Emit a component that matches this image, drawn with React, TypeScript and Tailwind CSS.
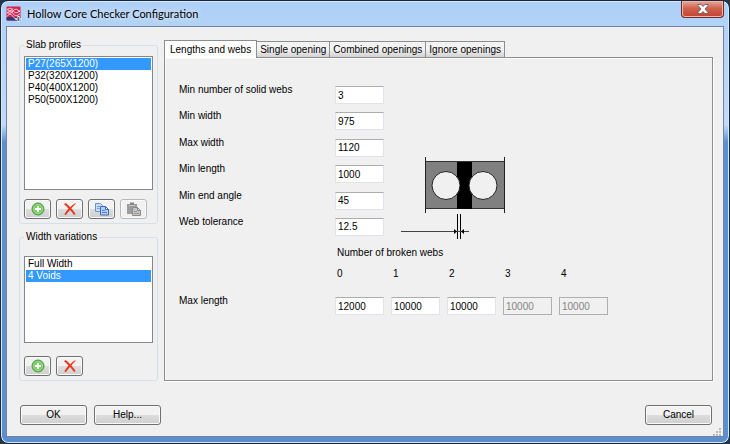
import React, { useState } from "react";

const profiles = ["P27(265X1200)", "P32(320X1200)", "P40(400X1200)", "P50(500X1200)"];
const variations = ["Full Width", "4 Voids"];
const tabs = ["Lengths and webs", "Single opening", "Combined openings", "Ignore openings"];

const fields = [
  { id: "solidWebs", label: "Min number of solid webs", value: "3" },
  { id: "minWidth", label: "Min width", value: "975" },
  { id: "maxWidth", label: "Max width", value: "1120" },
  { id: "minLength", label: "Min length", value: "1000" },
  { id: "minEndAngle", label: "Min end angle", value: "45" },
  { id: "webTolerance", label: "Web tolerance", value: "12.5" },
];

const maxLengths = [
  { webs: "0", value: "12000", disabled: false },
  { webs: "1", value: "10000", disabled: false },
  { webs: "2", value: "10000", disabled: false },
  { webs: "3", value: "10000", disabled: true },
  { webs: "4", value: "10000", disabled: true },
];

const AppIcon = () => (
  <svg width="16" height="16" viewBox="0 0 16 16">
    <rect x="0.5" y="0.5" width="14" height="14" rx="1" fill="#d4204c" />
    <path d="M0.5 11.500q5-1 14 0v2q0 1-1 1h-12q-1 0-1-1z" fill="#2a3a78" />
    <path
      d="M1 4.500c2-3 4-3 6 0s4 3 7 0M1 7.500c2-3 4-3 6 0s4 3 7 0M1 10.500c2-3 4-3 6 0s4 3 7 0M1 2.500c2 3 4 3 6 0M1 6q3 3 6-1t7 1"
      fill="none"
      stroke="#ffe4ea"
      strokeWidth="1"
    />
    <path d="M12.500 10v6M9.500 13h6" stroke="#f4f7fb" strokeWidth="2" />
    <path d="M12.500 11v4M10.500 13h4" stroke="#4a5a78" strokeWidth="0.9" />
  </svg>
);

const AddIcon = () => (
  <svg width="14" height="14" viewBox="0 0 14 14">
    <circle cx="7" cy="7" r="6" fill="#62b64f" stroke="#4a9d45" />
    <circle cx="7" cy="7" r="4.600" fill="#7cc965" stroke="#b6e3a5" strokeWidth="0.8" />
    <path d="M7 4v6M4 7h6" stroke="#fff" strokeWidth="1.800" />
  </svg>
);

const DeleteIcon = () => (
  <svg width="14" height="14" viewBox="0 0 14 14">
    <path
      d="M1 2.200 2.600 1q2.600 1.800 4.600 4.200Q9.400 2.600 12.200 1.200l.6.500Q10 4 8.400 6.600q2.600 3 4.200 5.400l-1.600.9Q9.200 10 7 7.900 4.600 10.400 3 13l-1.800-.6Q3 9.200 5.500 6.400 3.600 4.200 1 2.200z"
      fill="#e8361f"
    />
  </svg>
);

const CopyIcon = () => (
  <svg width="16" height="14" viewBox="0 0 16 14">
    <path d="M1.500 1.500h5l2 2v6h-7z" fill="#c9dcf7" stroke="#6b93d4" />
    <path d="M3 4.500h3M3 6.500h4" stroke="#7ba3e0" />
    <path d="M6.500 4.500h5l3 3v5.500h-8z" fill="#b4cdf3" stroke="#3c69bd" />
    <path d="M11.500 4.500v3h3z" fill="#eef5ff" stroke="#3c69bd" />
    <path d="M8 8.500h3M8 10.500h5" stroke="#5583d0" />
  </svg>
);

const PasteIcon = () => (
  <svg width="16" height="14" viewBox="0 0 16 14">
    <path d="M1 2h10v10H1z" fill="#9c9c9c" />
    <path d="M4 0.500h4v2.500H4z" fill="#868686" />
    <path d="M3 3.500h6" stroke="#c8c8c8" />
    <path d="M6.500 5.500h5l3 3v5h-8z" fill="#c4c4c4" stroke="#8a8a8a" />
    <path d="M11.500 5.500v3h3z" fill="#e6e6e6" stroke="#8a8a8a" />
    <path d="M8 9.500h3M8 11.500h5" stroke="#999" />
  </svg>
);

const SlabDrawing = () => (
  <svg width="108" height="84" viewBox="0 0 108 84" className="mt-[72px] ml-4 shrink-0">
    <rect x="26" y="6" width="79" height="46" fill="#808080" />
    <path d="M26 5.500h79M26 52.500h79" stroke="#333" />
    <path d="M25.500 1v56M104.500 1v56" stroke="#222" />
    <rect x="57" y="6" width="15" height="47" fill="#000" />
    <circle cx="46" cy="29.500" r="14" fill="#f0f0f0" stroke="#222" />
    <circle cx="83" cy="29.500" r="14" fill="#f0f0f0" stroke="#222" />
    <path d="M57.500 58v25M60.500 58v25" stroke="#000" />
    <path d="M1 75.500h68" stroke="#444" />
    <path d="M54 73v5l3-2.500zM64 73v5l-3-2.500z" fill="#000" />
  </svg>
);

const ToolButton = ({ label, disabled, children }: any) => (
  <button
    aria-label={label}
    disabled={disabled}
    className="flex h-5 w-[27px] items-center justify-center rounded-[3px] border border-[#707070] bg-linear-to-b from-[#f2f2f2] from-50% via-[#dddddd] via-51% to-[#cfcfcf] shadow-[inset_0_0_0_1px_#fafafa] disabled:border-[#b8b8b8] disabled:from-[#f2f2f2] disabled:via-[#f1f1f1] disabled:to-[#f0f0f0]"
  >
    {children}
  </button>
);

const DialogButton = ({ children }: any) => (
  <button className="h-5 w-[67px] rounded-[3px] border border-[#707070] bg-linear-to-b from-[#f2f2f2] from-50% via-[#dddddd] via-51% to-[#cfcfcf] shadow-[inset_0_0_0_1px_#fafafa]">
    {children}
  </button>
);

const ListBox = ({ label, items, selected, onSelect, className }: any) => (
  <ul role="listbox" aria-label={label} className={`border border-[#828790] bg-white p-px ${className}`}>
    {items.map((item: string, index: number) => (
      <li
        key={item}
        role="option"
        aria-selected={index === selected}
        onClick={() => onSelect(index)}
        className={`h-3 cursor-default pl-0.5 ${index === selected ? "bg-[#3399ff] text-white" : ""}`}
      >
        {item}
      </li>
    ))}
  </ul>
);

const inputClass =
  "h-[18px] w-[49px] border border-[#e2e3ea] border-t-[#abadb3] bg-white px-0.5 outline-none disabled:border-[#afafaf] disabled:bg-[#f0f0f0] disabled:text-[#838383]";

export default function App() {
  const [profile, setProfile] = useState(0);
  const [variation, setVariation] = useState(1);
  const [tab, setTab] = useState(0);

  return (
    <div className="min-h-screen bg-[#26364d] font-['Liberation_Sans',Arial,sans-serif] text-[10px] leading-3 text-black">
      <div className="flex min-h-screen flex-col rounded-lg border border-[#1b2636] bg-linear-to-b from-[#aed0f7] via-[#c3daf5] via-28% to-[#5b8fd0] to-32% px-[5px] pb-1.5 shadow-[inset_0_0_0_1px_#d6e8fb]">
        <header className="flex h-[25px] items-start justify-between">
          <div className="flex items-center gap-[5px] pt-[5px]">
            <AppIcon />
            <h1 className="font-[Lato,'Open_Sans',sans-serif] text-[11px] leading-4 text-shadow-[0_0_6px_#ffffff]">
              Hollow Core Checker Configuration
            </h1>
          </div>
          <button
            aria-label="Close"
            className="flex h-[17px] w-[43px] items-center justify-center rounded-b border border-t-0 border-[#6b2a28] bg-linear-to-b from-[#e5a99c] via-[#cf6350] via-45% to-[#c4402c] shadow-[inset_0_0_0_1px_#eeb7aa]"
          >
            <svg width="12" height="10" viewBox="0 0 12 10">
              <path d="M1 .5h3l2 2 2-2h3v1L8 5l3 3.500v1H8l-2-2-2 2H1v-1L4 5 1 1.500z" fill="#fff" stroke="#5c5f6b" strokeWidth="0.9" />
            </svg>
          </button>
        </header>

        <main className="flex flex-1 flex-col border border-[#6e86a3] bg-[#f0f0f0] pt-3 pr-2.5 pl-3">
          <div className="flex gap-1.5">
            <aside className="flex w-[139px] shrink-0 flex-col gap-[7px]">
              <fieldset className="rounded-[3px] border border-[#d5dfe5] px-1 pb-1">
                <legend className="px-0.5">Slab profiles</legend>
                <ListBox
                  label="Slab profiles"
                  items={profiles}
                  selected={profile}
                  onSelect={setProfile}
                  className="mt-[5px] h-[134px]"
                />
                <div className="mt-[9px] flex gap-[5px]">
                  <ToolButton label="Add profile"><AddIcon /></ToolButton>
                  <ToolButton label="Delete profile"><DeleteIcon /></ToolButton>
                  <ToolButton label="Copy profile"><CopyIcon /></ToolButton>
                  <ToolButton label="Paste profile" disabled><PasteIcon /></ToolButton>
                </div>
              </fieldset>

              <fieldset className="rounded-[3px] border border-[#d5dfe5] px-1 pb-1">
                <legend className="px-0.5">Width variations</legend>
                <ListBox
                  label="Width variations"
                  items={variations}
                  selected={variation}
                  onSelect={setVariation}
                  className="mt-[13px] h-[87px]"
                />
                <div className="mt-[13px] flex gap-[5px]">
                  <ToolButton label="Add variation"><AddIcon /></ToolButton>
                  <ToolButton label="Delete variation"><DeleteIcon /></ToolButton>
                </div>
              </fieldset>
            </aside>

            <section className="flex flex-1 flex-col">
              <div role="tablist" className="flex h-[18px] items-end">
                {tabs.map((name, index) => (
                  <button
                    key={name}
                    role="tab"
                    aria-selected={index === tab}
                    onClick={() => setTab(index)}
                    className={
                      index === tab
                        ? "relative -mb-px h-[18px] border border-b-0 border-[#8c8e94] bg-white px-[5px]"
                        : "h-4 border border-b-0 border-l-0 border-[#8c8e94] bg-linear-to-b from-[#f3f3f3] from-50% to-[#d2d2d2] px-[3px]"
                    }
                  >
                    {name}
                  </button>
                ))}
              </div>

              <div role="tabpanel" className="flex-1 border border-[#8c8e94] pt-[26px] pl-3.5 shadow-[1px_1px_0_#fff,inset_1px_1px_0_#fafafa]">
                <div className="flex items-start">
                  <div className="flex h-[152px] flex-col justify-between">
                    {fields.map((field) => (
                      <div key={field.id} className="flex h-5 items-start">
                        <label htmlFor={field.id} className="w-[156px]">{field.label}</label>
                        <input id={field.id} defaultValue={field.value} className={`mt-0.5 ${inputClass}`} />
                      </div>
                    ))}
                  </div>
                  <SlabDrawing />
                </div>

                <div className="mt-[7px] pl-[158px]">Number of broken webs</div>
                <div className="mt-[9px] flex gap-[7px] pl-[156px]">
                  {maxLengths.map((item) => (
                    <label key={item.webs} htmlFor={`webs${item.webs}`} className="w-[49px] pl-0.5">
                      {item.webs}
                    </label>
                  ))}
                </div>
                <div className="mt-[15px] flex items-start">
                  <span className="w-[156px]">Max length</span>
                  <div className="mt-0.5 flex gap-[7px]">
                    {maxLengths.map((item) => (
                      <input
                        key={item.webs}
                        id={`webs${item.webs}`}
                        defaultValue={item.value}
                        disabled={item.disabled}
                        className={inputClass}
                      />
                    ))}
                  </div>
                </div>
              </div>
            </section>
          </div>

          <footer className="mt-6 flex gap-[7px] pr-px pl-px">
            <DialogButton>OK</DialogButton>
            <DialogButton>Help...</DialogButton>
            <div className="flex-1" />
            <DialogButton>Cancel</DialogButton>
          </footer>

          <svg width="8" height="8" viewBox="0 0 8 8" className="mt-auto -mr-2 self-end" fill="#b8b8b8">
            <path d="M6 0h2v2H6zM3 3h2v2H3zM6 3h2v2H6zM0 6h2v2H0zM3 6h2v2H3zM6 6h2v2H6z" />
          </svg>
        </main>
      </div>
    </div>
  );
}
